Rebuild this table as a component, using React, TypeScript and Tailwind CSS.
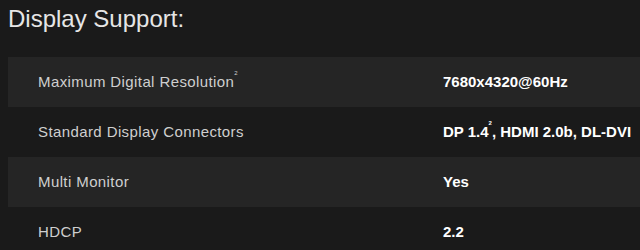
const rows: { label: string; sup?: boolean; value: React.ReactNode }[] = [
  { label: "Maximum Digital Resolution", sup: true, value: "7680x4320@60Hz" },
  {
    label: "Standard Display Connectors",
    value: (
      <>
        DP 1.4<sup className="text-[6px] align-top relative top-[2px]">2</sup>, HDMI 2.0b, DL-DVI
      </>
    ),
  },
  { label: "Multi Monitor", value: "Yes" },
  { label: "HDCP", value: "2.2" },
];

export default function App() {
  return (
    <div className="w-[640px] h-[250px] overflow-hidden bg-[#1a1a1a] font-['Liberation_Sans',sans-serif]">
      <h2 className="pl-2 pt-[5px] h-[57px] text-[24px] leading-[28px] font-light text-[#e6e6e6]">
        Display Support:
      </h2>
      <div className="ml-2">
        {rows.map((r, i) => (
          <div
            key={r.label}
            className={`flex items-center h-[50px] ${i % 2 === 0 ? "bg-[#252525]" : "bg-[#1a1a1a]"}`}
          >
            <div className="w-[435px] pl-[30px] text-[15px] tracking-[0.4px] text-[#cfcfcf]">
              {r.label}
              {r.sup && <sup className="text-[6px] align-top relative top-[2px]">2</sup>}
            </div>
            <div className="text-[15px] font-bold text-white">{r.value}</div>
          </div>
        ))}
      </div>
    </div>
  );
}
